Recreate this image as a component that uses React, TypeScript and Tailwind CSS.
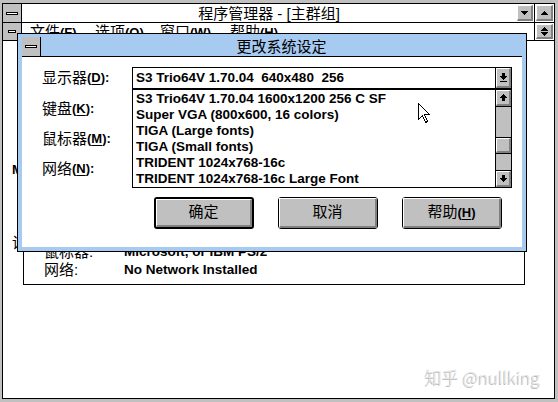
import React from 'react';

// small pixel glyphs used on the Win 3.1 chrome buttons
const TriUp = () => (
  <svg width="7" height="4" viewBox="0 0 7 4" shapeRendering="crispEdges">
    <path d="M3 0h1v1h1v1h1v1h1v1H0V3h1V2h1V1h1z" fill="#000" />
  </svg>
);

const TriDown = () => (
  <svg width="7" height="4" viewBox="0 0 7 4" shapeRendering="crispEdges">
    <path d="M0 0h7v1H6v1H5v1H4v1H3V3H2V2H1V1H0z" fill="#000" />
  </svg>
);

const ArrowUp = () => (
  <svg width="7" height="7" viewBox="0 0 7 7" shapeRendering="crispEdges">
    <path d="M3 0h1v1h1v1h1v1h1v1H5v3H2V4H0V3h1V2h1V1h1z" fill="#000" />
  </svg>
);

const ArrowDown = () => (
  <svg width="7" height="7" viewBox="0 0 7 7" shapeRendering="crispEdges">
    <path d="M2 0h3v3h2v1H6v1H5v1H4v1H3V6H2V5H1V4H0V3h2z" fill="#000" />
  </svg>
);

const ComboArrow = () => (
  <svg width="7" height="9" viewBox="0 0 7 9" shapeRendering="crispEdges">
    <path d="M2 0h3v3h2v1H6v1H5v1H4v1H3V6H2V5H1V4H0V3h2z" fill="#000" />
    <rect x="0" y="8" width="7" height="1" fill="#000" />
  </svg>
);

const Bevel: React.FC<{ className?: string; children?: React.ReactNode }> = ({ className = '', children }) => (
  <div
    className={`flex items-center justify-center bg-[#c0c0c0] border-t border-l border-b-2 border-r-2 border-t-white border-l-white border-b-[#808080] border-r-[#808080] ${className}`}
  >
    {children}
  </div>
);

const SysBox: React.FC<{ small?: boolean }> = ({ small }) => (
  <div className="flex w-[19px] shrink-0 items-center justify-center border-r border-black bg-[#c0c0c0]">
    <div className={`h-[3px] border border-black bg-white ${small ? 'w-[8px]' : 'w-[12px]'}`} />
  </div>
);

const Key: React.FC<{ k: string }> = ({ k }) => (
  <span className="text-[13px] font-bold">
    (<span className="underline underline-offset-2">{k}</span>)
  </span>
);

const drivers = [
  'S3 Trio64V 1.70.04 1600x1200 256 C SF',
  'Super VGA (800x600, 16 colors)',
  'TIGA (Large fonts)',
  'TIGA (Small fonts)',
  'TRIDENT 1024x768-16c',
  'TRIDENT 1024x768-16c Large Font',
];

const labels = [
  { text: '显示器', key: 'D', mt: 'mt-[11px]' },
  { text: '键盘', key: 'K', mt: 'mt-[11px]' },
  { text: '鼠标器', key: 'M', mt: 'mt-[10px]' },
  { text: '网络', key: 'N', mt: 'mt-[10px]' },
];

const PushButton: React.FC<{ isDefault?: boolean; children: React.ReactNode }> = ({ isDefault, children }) => (
  <div
    className={`flex h-[32px] w-[100px] rounded-[3px] border-black ${isDefault ? 'border-2' : 'border'}`}
  >
    <Bevel className="flex-1 text-[15px]">{children}</Bevel>
  </div>
);

export default function App() {
  return (
    <div className="relative h-[402px] w-[558px] overflow-hidden bg-[#c0c0c0] pb-[3px] pl-[2px] pr-[3px] pt-[3px] font-['Liberation_Sans','Noto_Sans_CJK_SC',sans-serif] text-black">
      {/* Program Manager frame */}
      <div className="flex h-full flex-col border border-black bg-white">
        <div className="flex h-[19px] shrink-0 border-b border-black">
          <SysBox />
          <div className="flex flex-1 items-center justify-center text-[15px] leading-none">
            程序管理器 - [主群组]
          </div>
          <div className="flex w-[18px] p-[1px]">
            <Bevel className="flex-1">
              <TriDown />
            </Bevel>
          </div>
          <div className="flex w-[20px] border-l border-black p-[1px]">
            <Bevel className="flex-1">
              <TriUp />
            </Bevel>
          </div>
        </div>

        <div className="flex h-[18px] shrink-0 border-b border-black">
          <SysBox small />
          <div className="flex flex-1 items-center pl-[8px] text-[15px] leading-none">
            <span className="w-[65px]">
              文件<Key k="F" />
            </span>
            <span className="w-[65px]">
              选项<Key k="O" />
            </span>
            <span className="w-[70px]">
              窗口<Key k="W" />
            </span>
            <span>
              帮助<Key k="H" />
            </span>
          </div>
          <div className="flex w-[20px] border-l border-black p-[1px]">
            <Bevel className="flex-1 flex-col gap-[1px]">
              <TriUp />
              <TriDown />
            </Bevel>
          </div>
        </div>

        {/* Windows Setup group content */}
        <div className="flex flex-1">
          <div className="flex w-[20px] shrink-0 flex-col pl-[9px]">
            <span className="mt-[121px] text-[13px] font-bold leading-[16px]">M</span>
            <span className="mt-[57px] text-[15px] leading-[16px]">设</span>
          </div>
          <div className="mt-[109px] h-[135px] w-[502px] border border-black pl-[20px] pt-[92px]">
            <div className="flex h-[18px] items-center">
              <span className="w-[80px] text-[15px]">鼠标器:</span>
              <span className="text-[13.5px] font-bold">Microsoft, or IBM PS/2</span>
            </div>
            <div className="flex h-[18px] items-center">
              <span className="w-[80px] text-[15px]">网络:</span>
              <span className="text-[13.5px] font-bold">No Network Installed</span>
            </div>
          </div>
        </div>
      </div>

      {/* 更改系统设定 dialog */}
      <div className="absolute left-[17px] top-[33px] flex h-[219px] w-[510px] flex-col border border-black bg-[#a6caf0] px-[4px] pb-[4px] pt-[3px]">
        <div className="flex h-[20px] shrink-0 border-b border-black">
          <SysBox />
          <div className="flex flex-1 items-center justify-center text-[15px] leading-none">更改系统设定</div>
        </div>
        <div className="flex flex-1 bg-white">
          <div className="flex w-[110px] flex-col pl-[20px]">
            {labels.map((l) => (
              <div key={l.key} className={`flex h-[20px] items-center text-[15px] ${l.mt}`}>
                {l.text}
                <Key k={l.key} />
                <span className="text-[13px] font-bold">:</span>
              </div>
            ))}
          </div>
          <div className="flex w-[380px] flex-col">
            <div className="mt-[10px] flex h-[22px] border border-black">
              <div className="flex flex-1 items-center whitespace-pre pl-[3px] text-[13.5px] font-bold">
                S3 Trio64V 1.70.04  640x480  256
              </div>
              <div className="flex w-[16px] border-l border-black">
                <Bevel className="flex-1">
                  <ComboArrow />
                </Bevel>
              </div>
            </div>
            <div className="flex h-[99px] border border-black">
              <div className="flex flex-1 flex-col pl-[3px] pt-[1px] text-[13.5px] font-bold">
                {drivers.map((d) => (
                  <div key={d} className="flex h-[16px] items-center">
                    {d}
                  </div>
                ))}
              </div>
              <div className="flex w-[16px] flex-col border-l border-black bg-[#c0c0c0]">
                <div className="flex h-[17px] border-b border-black">
                  <Bevel className="flex-1">
                    <ArrowUp />
                  </Bevel>
                </div>
                <div className="h-[30px]" />
                <div className="flex h-[17px] border-y border-black">
                  <Bevel className="flex-1" />
                </div>
                <div className="flex-1" />
                <div className="flex h-[17px] border-t border-black">
                  <Bevel className="flex-1">
                    <ArrowDown />
                  </Bevel>
                </div>
              </div>
            </div>
            <div className="mt-[9px] flex gap-[24px] pl-[22px]">
              <PushButton isDefault>确定</PushButton>
              <PushButton>取消</PushButton>
              <PushButton>
                帮助<Key k="H" />
              </PushButton>
            </div>
          </div>
        </div>
      </div>

      {/* mouse pointer */}
      <svg
        className="absolute left-[418px] top-[103px]"
        width="12"
        height="20"
        viewBox="0 0 12 20"
        shapeRendering="crispEdges"
      >
        <path d="M0.5 0.5V16.5L4.5 12.5L7.5 19.5L9.5 18.5L6.5 11.5H11.5Z" fill="#fff" stroke="#000" strokeWidth="1" />
      </svg>

      <div className="absolute left-[425px] top-[365px] font-['Noto_Sans_CJK_SC',sans-serif] text-[17px] font-light leading-[24px] text-[#e2e2e2] [text-shadow:-1px_1px_0_#b8b8b8]">
        知乎 @nullking
      </div>
    </div>
  );
}
